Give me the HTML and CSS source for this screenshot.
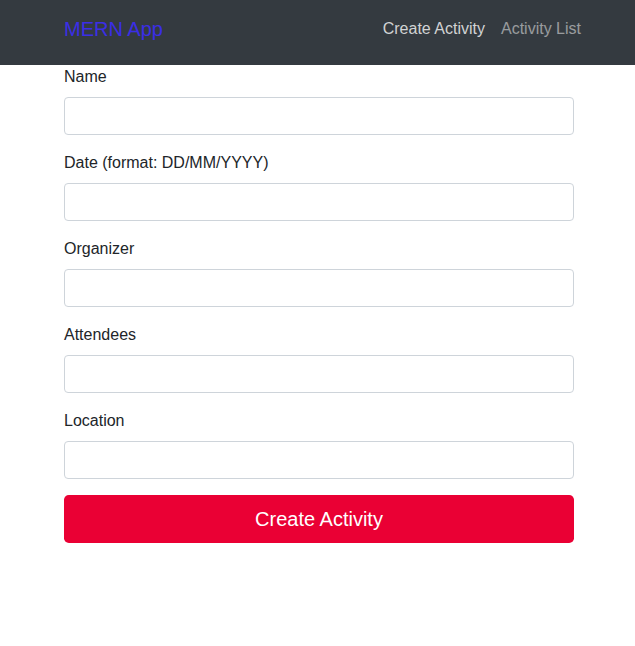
FILE: index.html
```html
<!DOCTYPE html>
<html>
<head>
<meta charset="utf-8">
<link rel="stylesheet" href="styles.css">
</head>
<body>
<nav class="navbar">
  <a class="brand" href="#">MERN App</a>
  <div class="nav-links">
    <a class="nav-link active" href="#">Create Activity</a>
    <a class="nav-link" href="#">Activity List</a>
  </div>
</nav>
<main class="container">
  <form class="form">
    <div class="form-group">
      <label>Name</label>
      <input type="text" class="input">
    </div>
    <div class="form-group">
      <label>Date (format: DD/MM/YYYY)</label>
      <input type="text" class="input">
    </div>
    <div class="form-group">
      <label>Organizer</label>
      <input type="text" class="input">
    </div>
    <div class="form-group">
      <label>Attendees</label>
      <input type="text" class="input">
    </div>
    <div class="form-group">
      <label>Location</label>
      <input type="text" class="input">
    </div>
    <button type="button" class="btn">Create Activity</button>
  </form>
</main>
</body>
</html>
```
FILE: styles.css
```css
* { box-sizing: border-box; }
html, body {
  margin: 0;
  padding: 0;
  background: #fff;
  font-family: "Liberation Sans", Arial, sans-serif;
  font-size: 16px;
  line-height: 1.5;
  color: #212529;
}
.navbar {
  height: 65px;
  background: #343a40;
  display: flex;
  align-items: center;
  justify-content: space-between;
  padding: 0 46px 0 64px;
}
.brand {
  color: #3b2ee6;
  font-size: 20px;
  line-height: 30px;
  text-decoration: none;
  margin-top: -8px;
}
.nav-links {
  display: flex;
  margin-top: -8px;
}
.nav-link {
  color: rgba(255,255,255,0.5);
  text-decoration: none;
  padding: 0 8px;
  line-height: 24px;
}
.nav-link.active {
  color: rgba(255,255,255,0.78);
}
.container {
  width: 510px;
  margin-left: 64px;
}
.form-group {
  margin-bottom: 16px;
  display: flex;
  flex-direction: column;
}
label {
  display: block;
  margin-bottom: 8px;
  line-height: 24px;
}
.input {
  height: 38px;
  width: 100%;
  border: 1px solid #ced4da;
  border-radius: 4px;
  padding: 6px 12px;
  font-size: 16px;
  font-family: inherit;
  background: #fff;
}
.btn {
  width: 100%;
  height: 48px;
  border: none;
  border-radius: 4.8px;
  background: #ea0034;
  color: #fff;
  font-family: inherit;
  font-size: 20px;
  line-height: 30px;
  padding: 8px 16px;
}
```
